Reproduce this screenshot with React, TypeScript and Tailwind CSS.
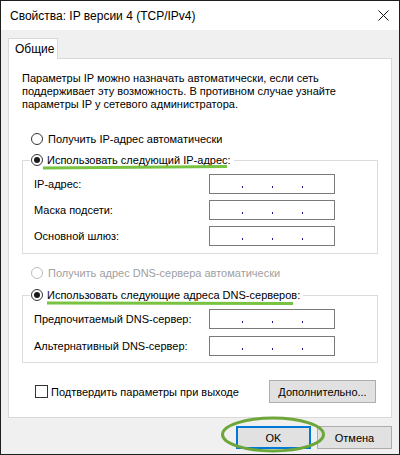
import React from "react";

const font = { fontFamily: '"Liberation Sans", Arial, sans-serif' };

function Radio({ checked = false, disabled = false }: { checked?: boolean; disabled?: boolean }) {
    return (
        <span
            className={
                "flex h-[12px] w-[12px] shrink-0 items-center justify-center rounded-full border bg-white " +
                (disabled ? "border-[#bcbcbc]" : "border-[#333333]")
            }
        >
            {checked && <span className="h-[6px] w-[6px] rounded-full bg-[#1a1a1a]" />}
        </span>
    );
}

function IpBox() {
    return (
        <div className="flex h-[20px] w-[126px] items-end gap-[29px] border border-[#7a7a7a] bg-white pb-[5px] pl-[32px]">
            <span className="h-[2px] w-px bg-[#1c1c8c]" />
            <span className="h-[2px] w-px bg-[#1c1c8c]" />
            <span className="h-[2px] w-px bg-[#1c1c8c]" />
        </div>
    );
}

function Row({ label, gapTop }: { label: string; gapTop: string }) {
    return (
        <div className={"grid grid-cols-[175px_126px] items-center pl-[11px] " + gapTop}>
            <span>{label}</span>
            <IpBox />
        </div>
    );
}

function Button({ children, primary = false, className = "" }: { children: React.ReactNode; primary?: boolean; className?: string }) {
    return (
        <button
            className={
                "flex h-[23px] items-center justify-center bg-[#e1e1e1] text-black " +
                (primary ? "border-2 border-[#0078d7] " : "border border-[#adadad] ") +
                className
            }
        >
            {children}
        </button>
    );
}

export default function App() {
    return (
        <div
            style={font}
            className="relative flex h-[455px] w-[400px] flex-col border border-[#1e1e1e] bg-[#f0f0f0] text-[11px] leading-[16px] text-black"
        >
            {/* Title bar */}
            <div className="flex h-[29px] shrink-0 items-center justify-between bg-white pl-[9px] pr-[9px]">
                <span className="text-[12px]">Свойства: IP версии 4 (TCP/IPv4)</span>
                <svg width="11" height="11" viewBox="0 0 11 11" className="mr-[1px]">
                    <path d="M0.5 0.5 L10.5 10.5 M10.5 0.5 L0.5 10.5" stroke="#111" strokeWidth="1" />
                </svg>
            </div>

            {/* Body */}
            <div className="flex flex-1 flex-col px-[7px] pt-[8px]">
                {/* Tab strip */}
                <div className="flex">
                    <div className="relative z-10 -mb-px flex h-[21px] w-[50px] items-center border border-b-0 border-[#d9d9d9] bg-white pl-[6px] text-[12px]">
                        Общие
                    </div>
                </div>

                {/* Tab panel */}
                <div className="flex flex-col border border-[#d9d9d9] bg-white px-[13px] pb-[14px] pt-[13px]">
                    <p className="leading-[13px]">
                        Параметры IP можно назначать автоматически, если сеть
                        <br />
                        поддерживает эту возможность. В противном случае узнайте
                        <br />
                        параметры IP у сетевого администратора.
                    </p>

                    <div className="mt-[20px] flex h-[16px] items-center gap-[5px] pl-[9px]">
                        <Radio />
                        <span>Получить IP-адрес автоматически</span>
                    </div>

                    {/* Group 1 */}
                    <div className="mt-[13px] border border-[#dcdcdc] pb-[7px]">
                        <div className="-mt-[9px] ml-[7px] flex h-[16px] w-fit items-center gap-[4px] bg-white pl-px pr-[3px]">
                            <Radio checked />
                            <span>Использовать следующий IP-адрес:</span>
                        </div>
                        <Row label="IP-адрес:" gapTop="mt-[6px]" />
                        <Row label="Маска подсети:" gapTop="mt-[6px]" />
                        <Row label="Основной шлюз:" gapTop="mt-[6px]" />
                    </div>

                    <div className="mt-[11px] flex h-[16px] items-center gap-[5px] pl-[9px] text-[#a0a0a0]">
                        <Radio disabled />
                        <span>Получить адрес DNS-сервера автоматически</span>
                    </div>

                    {/* Group 2 */}
                    <div className="mt-[14px] border border-[#dcdcdc] pb-[6px]">
                        <div className="-mt-[9px] ml-[7px] flex h-[16px] w-fit items-center gap-[4px] bg-white pl-px pr-[3px]">
                            <Radio checked />
                            <span>Использовать следующие адреса DNS-серверов:</span>
                        </div>
                        <Row label="Предпочитаемый DNS-сервер:" gapTop="mt-[6px]" />
                        <Row label="Альтернативный DNS-сервер:" gapTop="mt-[7px]" />
                    </div>

                    <div className="mt-[17px] flex items-center justify-between pl-[13px] pr-[2px]">
                        <div className="flex items-center gap-[3px]">
                            <span className="h-[13px] w-[13px] border border-[#333333] bg-white" />
                            <span>Подтвердить параметры при выходе</span>
                        </div>
                        <Button className="w-[107px]">Дополнительно...</Button>
                    </div>
                </div>

                {/* Dialog buttons */}
                <div className="mt-[8px] flex justify-end gap-[6px]">
                    <Button primary className="w-[75px]">OK</Button>
                    <Button className="w-[75px]">Отмена</Button>
                </div>
            </div>

            {/* Green annotation marks */}
            <svg className="pointer-events-none absolute left-[-1px] top-[-1px]" width="400" height="455" viewBox="0 0 400 455">
                <path d="M43 168 Q 135 167.5 227 166.5" stroke="#78c341" strokeWidth="3" fill="none" />
                <path d="M47 303 Q 170 303 293 303.5" stroke="#78c341" strokeWidth="3" fill="none" />
                <ellipse cx="273" cy="434.5" rx="50.5" ry="16.5" stroke="#6ea63b" strokeWidth="3" fill="none" />
            </svg>
        </div>
    );
}
